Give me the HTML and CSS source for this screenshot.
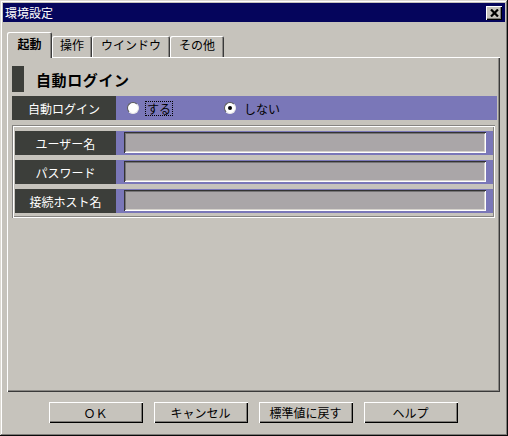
FILE: index.html
```html
<!DOCTYPE html>
<html lang="ja">
<head>
<meta charset="utf-8">
<title>環境設定</title>
<link rel="stylesheet" href="styles.css">
</head>
<body>
<div class="window">
  <div class="titlebar">
    <span class="title">環境設定</span>
    <span class="close"><svg width="9" height="8" viewBox="0 0 9 8"><path d="M1 0.5 L8 7.5 M8 0.5 L1 7.5" stroke="#000" stroke-width="2.2" fill="none"/></svg></span>
  </div>
  <div class="content">
    <div class="tabs">
      <div class="tab active w1">起動</div>
      <div class="tab w2">操作</div>
      <div class="tab w3">ウインドウ</div>
      <div class="tab w4">その他</div>
    </div>
    <div class="panel">
      <div class="section">
        <span class="marker"></span>
        <span class="section-title">自動ログイン</span>
      </div>
      <div class="row">
        <div class="label wide">自動ログイン</div>
        <div class="field radios">
          <span class="option"><span class="radio"></span><span class="opt-text focus">する</span></span>
          <span class="option"><span class="radio checked"></span><span class="opt-text">しない</span></span>
        </div>
      </div>
      <div class="group">
        <div class="row">
          <div class="label">ユーザー名</div>
          <div class="field"><div class="input"></div></div>
        </div>
        <div class="row">
          <div class="label">パスワード</div>
          <div class="field"><div class="input"></div></div>
        </div>
        <div class="row">
          <div class="label">接続ホスト名</div>
          <div class="field"><div class="input"></div></div>
        </div>
      </div>
    </div>
    <div class="buttons">
      <div class="button">ＯＫ</div>
      <div class="button">キャンセル</div>
      <div class="button">標準値に戻す</div>
      <div class="button">ヘルプ</div>
    </div>
  </div>
</div>
</body>
</html>
```
FILE: styles.css
```css
html, body {
  margin: 0;
  padding: 0;
  background: #c6c3bc;
}
body {
  font-family: "Noto Sans CJK JP", "Noto Sans", sans-serif;
  font-size: 12px;
  color: #000;
}
.window {
  width: 508px;
  height: 436px;
  box-sizing: border-box;
  padding: 3px;
  background: #c6c3bc;
  box-shadow: inset -1px -1px #0a0a0a, inset 1px 1px #dcd9d2, inset -2px -2px #7e7c78, inset 2px 2px #ffffff;
  display: flex;
  flex-direction: column;
}
.titlebar {
  height: 19px;
  background: #05055c;
  display: flex;
  align-items: center;
  justify-content: space-between;
  padding: 0 3px 0 2px;
}
.title {
  color: #fff;
  font-size: 12px;
  line-height: 19px;
}
.close {
  width: 16px;
  height: 14px;
  background: #c6c3bc;
  box-shadow: inset 1px 1px #fff, inset -1px -1px #000, inset -2px -2px #7e7c78;
  display: flex;
  align-items: center;
  justify-content: center;
}
.content {
  padding: 11px 5px 0 4px;
  display: flex;
  flex-direction: column;
}
.tabs {
  display: flex;
  align-items: flex-end;
  height: 25px;
  position: relative;
  z-index: 1;
  margin-bottom: -1px;
}
.tab {
  box-sizing: border-box;
  height: 21px;
  padding-top: 2px;
  line-height: 14px;
  text-align: center;
  background: #c6c3bc;
  border-radius: 2px 2px 0 0;
  box-shadow: inset 1px 1px #fff, inset -1px 0 #3a3a3a, inset -2px 0 #8a8884;
  margin-bottom: 1px;
}
.tab.active {
  height: 26px;
  padding-top: 5px;
  font-weight: bold;
  margin-bottom: 0;
  box-shadow: inset 1px 1px #fff, inset -1px 0 #3a3a3a, inset -2px 0 #8a8884;
}
.w1 { width: 45px; }
.w2 { width: 40px; }
.w3 { width: 78px; }
.w4 { width: 54px; }
.panel {
  box-sizing: border-box;
  height: 335px;
  padding: 9px 3px 0 5px;
  box-shadow: inset 1px 1px #fff, inset -1px -1px #3a3a3a, inset -2px -2px #8a8884;
  display: flex;
  flex-direction: column;
}
.section {
  height: 26px;
  display: flex;
  align-items: center;
  margin-bottom: 4px;
}
.marker {
  width: 12px;
  height: 26px;
  background: #3c3e3a;
}
.section-title {
  margin-left: 12px;
  font-size: 15px;
  font-weight: bold;
  letter-spacing: 0.6px;
}
.row {
  height: 24px;
  display: flex;
}
.label {
  width: 101px;
  background: #3c3e3a;
  color: #fff;
  display: flex;
  align-items: center;
  justify-content: center;
  font-size: 12px;
}
.label.wide {
  width: 104px;
}
.field {
  flex: 1;
  background: #7a77b8;
  display: flex;
  align-items: center;
}
.radios {
  padding-left: 11px;
}
.option {
  display: flex;
  align-items: center;
  width: 97px;
}
.radio {
  box-sizing: border-box;
  width: 12px;
  height: 12px;
  border-radius: 50%;
  background: #fff;
  border: 1px solid;
  border-color: #5a5a5a #e8e8e8 #e8e8e8 #5a5a5a;
  display: flex;
  align-items: center;
  justify-content: center;
}
.radio.checked::after {
  content: "";
  width: 4px;
  height: 4px;
  border-radius: 50%;
  background: #000;
}
.opt-text {
  margin-left: 6px;
  line-height: 13px;
  padding: 0 1px;
  border: 1px solid transparent;
}
.opt-text.focus {
  border: 1px dotted #000;
}
.group {
  margin-top: 5px;
  margin-right: 2px;
  box-sizing: border-box;
  height: 93px;
  padding: 6px 2px 0 3px;
  box-shadow: inset 1px 1px #858380, inset 2px 2px #fff, inset -1px -1px #fff, inset -2px -2px #858380;
  display: flex;
  flex-direction: column;
  gap: 5px;
}
.input {
  flex: 1;
  height: 21px;
  margin: 1px 7px 2px 8px;
  align-self: flex-start;
  background: #aaa6a8;
  box-shadow: inset 1px 1px #333, inset -1px -1px #fff, inset 2px 2px #767476, inset -2px -2px #d6d3cc;
}
.buttons {
  margin-top: 10px;
  display: flex;
  justify-content: center;
  gap: 11px;
  padding-right: 1px;
}
.button {
  width: 94px;
  height: 21px;
  box-sizing: border-box;
  display: flex;
  align-items: center;
  justify-content: center;
  background: #c6c3bc;
  box-shadow: inset 1px 1px #fff, inset -1px -1px #000, inset -2px -2px #7e7c78;
  font-size: 12px;
}
```
